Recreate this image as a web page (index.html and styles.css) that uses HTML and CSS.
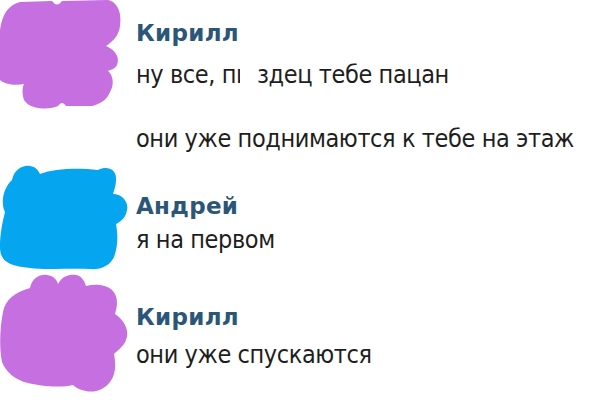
FILE: index.html
```html
<!DOCTYPE html>
<html lang="ru">
<head>
<meta charset="utf-8">
<title>Диалог</title>
<link rel="stylesheet" href="styles.css">
</head>
<body>
<div class="chat">
  <div class="group g1">
    <div class="avatar">
      <svg class="blob b1" width="130" height="112" viewBox="0 0 130 112">
        <path fill="#c66fe0" d="M 0 30 C 2 15, 8 5, 20 2 L 52 1 Q 57 8 62 1 L 108 0 C 118 2, 122 14, 120 26 C 119 36, 112 42, 106 46 C 116 50, 120 58, 117 65 C 115 69, 110 70, 108 71 C 114 76, 114 86, 110 92 C 107 100, 100 104, 92 106 L 66 106 Q 62 100 58 106 C 50 110, 30 110, 24 100 C 22 94, 22 88, 24 84 C 15 86, 4 84, 0 80 Z"/>
      </svg>
    </div>
    <div class="content">
      <div class="name">Кирилл</div>
      <div class="msg m-first">ну все, п<span class="cens">и<span class="cover"></span></span> здец тебе пацан</div>
      <div class="msg m-next">они уже поднимаются к тебе на этаж</div>
    </div>
  </div>
  <div class="group g2">
    <div class="avatar">
      <svg class="blob b2" width="130" height="110" viewBox="0 0 130 110">
        <path fill="#05a6ef" d="M 5 50 C 0 40, 4 25, 12 18 C 14 8, 22 3, 30 4 C 36 5, 38 8, 40 12 C 55 6, 80 6, 98 8 C 108 3, 117 8, 116 18 C 116 24, 114 28, 113 32 C 122 32, 129 40, 127 48 C 126 56, 120 60, 116 62 C 118 72, 118 85, 114 95 C 110 104, 100 108, 90 107 C 70 106, 45 108, 30 106 C 10 104, 0 100, 0 85 C 0 72, 2 62, 5 50 Z"/>
      </svg>
    </div>
    <div class="content">
      <div class="name">Андрей</div>
      <div class="msg m-tight">я на первом</div>
    </div>
  </div>
  <div class="group g3">
    <div class="avatar">
      <svg class="blob b3" width="130" height="125" viewBox="0 0 130 125">
        <path fill="#c66fe0" d="M 3 40 C 5 28, 15 20, 30 16 C 32 6, 40 2, 47 3 C 54 4, 57 8, 58 12 C 62 4, 70 2, 76 3 C 82 4, 85 10, 86 14 C 95 12, 105 12, 112 18 C 118 24, 118 32, 115 42 C 124 48, 130 58, 126 68 C 124 74, 118 78, 114 82 C 116 92, 116 102, 110 110 C 104 118, 94 121, 86 119 C 80 118, 76 116, 73 113 C 60 116, 40 114, 28 111 C 15 108, 6 100, 2 90 C -1 75, 0 55, 3 40 Z"/>
      </svg>
    </div>
    <div class="content">
      <div class="name">Кирилл</div>
      <div class="msg m-mid">они уже спускаются</div>
    </div>
  </div>
</div>
</body>
</html>
```

FILE: styles.css
```css
html, body {
  margin: 0;
  padding: 0;
  background: #ffffff;
}

.chat {
  display: flex;
  flex-direction: column;
  padding-top: 21px;
  padding-bottom: 40px;
  min-height: 406px;
  box-sizing: border-box;
}

.group {
  display: flex;
  align-items: flex-start;
}

.g2 { margin-top: 40px; }
.g3 { margin-top: 50px; }

.avatar {
  flex: 0 0 136px;
  height: 90px;
  margin-bottom: -90px;
}

.blob { display: block; overflow: visible; }
.b1 { margin-top: -21px; }
.b2 { margin-top: -32px; }
.b3 { margin-top: -33px; }

.content {
  display: flex;
  flex-direction: column;
}

.name {
  font-family: "DejaVu Sans", sans-serif;
  font-weight: bold;
  font-size: 23px;
  letter-spacing: 0.3px;
  line-height: 24px;
  color: #2b5678;
  white-space: nowrap;
}

.msg {
  font-family: "DejaVu Sans Condensed", "DejaVu Sans", sans-serif;
  font-stretch: semi-condensed;
  font-size: 25px;
  letter-spacing: -0.4px;
  line-height: 30px;
  color: #1e1e1e;
  white-space: nowrap;
}

.m-first { margin-top: 15px; }
.m-next { margin-top: 34px; }
.m-tight { margin-top: 7px; }
.m-mid { margin-top: 11px; }

.cens {
  position: relative;
}

.cover {
  position: absolute;
  left: 4px;
  top: 2px;
  width: 16px;
  height: 28px;
  background: #ffffff;
}
```
